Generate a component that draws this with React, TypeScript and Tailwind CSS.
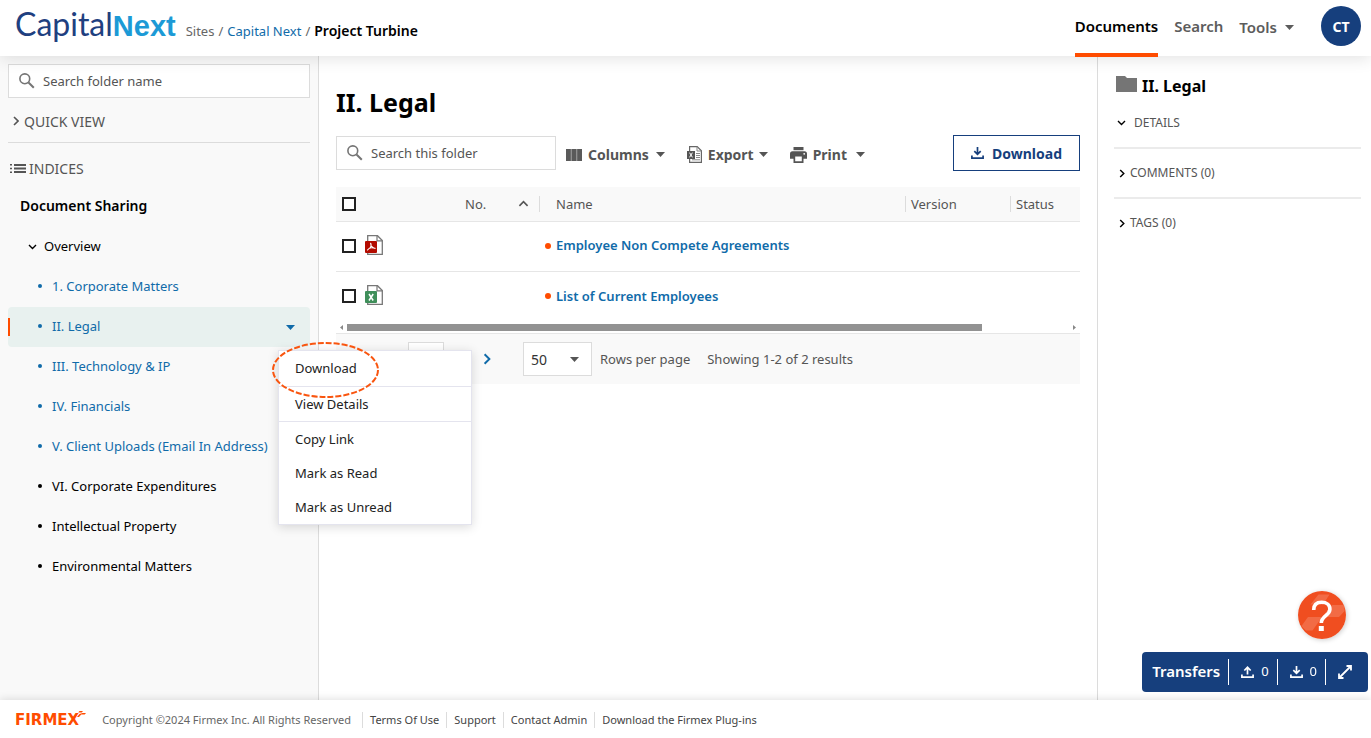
import { ReactNode } from 'react'

const treeItems = [
  { label: '1. Corporate Matters', linked: true },
  { label: 'II. Legal', linked: true, selected: true },
  { label: 'III. Technology & IP', linked: true },
  { label: 'IV. Financials', linked: true },
  { label: 'V. Client Uploads (Email In Address)', linked: true },
  { label: 'VI. Corporate Expenditures' },
  { label: 'Intellectual Property' },
  { label: 'Environmental Matters' },
]

const documents = [
  { name: 'Employee Non Compete Agreements', type: 'pdf' },
  { name: 'List of Current Employees', type: 'xls' },
]

const footerLinks = ['Terms Of Use', 'Support', 'Contact Admin', 'Download the Firmex Plug-ins']

function Caret({ className = '' }: { className?: string }) {
  return (
    <svg className={`h-[5px] w-[9px] shrink-0 ${className}`} viewBox="0 0 9 5" fill="currentColor">
      <path d="M0 0h9L4.5 5z" />
    </svg>
  )
}

function Chevron({ className = '' }: { className?: string }) {
  return (
    <svg className={`shrink-0 ${className}`} viewBox="0 0 6 10" fill="none" stroke="currentColor" strokeWidth="1.6">
      <path d="M1 1l4 4-4 4" />
    </svg>
  )
}

function ChevronDown({ className = 'h-[6px] w-[9px]' }: { className?: string }) {
  return (
    <svg className={`shrink-0 ${className}`} viewBox="0 0 9 6" fill="none" stroke="currentColor" strokeWidth="1.4">
      <path d="M1 1l3.5 3.5L8 1" />
    </svg>
  )
}

function SearchBox({ label, className }: { label: string; className: string }) {
  return (
    <label className={`flex h-[34px] items-center border border-[#dcdcdc] bg-white pl-[10px] ${className}`}>
      <svg className="h-4 w-4 shrink-0 text-[#757575]" viewBox="0 0 16 16" fill="none" stroke="currentColor">
        <circle cx="5.8" cy="5.8" r="4.9" strokeWidth="1.6" />
        <path d="M9.5 9.5l5.3 5.3" strokeWidth="2" />
      </svg>
      <input
        type="text"
        aria-label={label}
        placeholder={label}
        className="ml-2 h-full w-full min-w-0 bg-transparent text-[13px] outline-none placeholder:text-[#555]"
      />
    </label>
  )
}

function FileIcon({ type }: { type: string }) {
  return (
    <svg className="h-5 w-[18px]" viewBox="0 0 18 20">
      <path d="M2.7.7h9.8l4.8 4.8v13.8H2.7z" fill="#fff" stroke="#777" strokeWidth="1.3" />
      <path d="M12 .7v5.2h5.3" fill="none" stroke="#777" strokeWidth="1.2" />
      <rect y="6" width="12" height="12" rx="1" fill={type === 'pdf' ? '#b30b00' : '#3f8f5a'} />
      {type === 'pdf' ? (
        <path
          d="M5.700 8.200c.7 1.800.2 4-.9 5M5.600 8.300c.2 2.700 1.800 4.600 4.500 5.200M2.500 15c1-1.700 4.200-2.700 7.600-1.700"
          fill="none"
          stroke="#fff"
          strokeWidth="1.1"
          strokeLinecap="round"
        />
      ) : (
        <path d="M4 9l4.200 6.500M8.200 9L4 15.500" stroke="#fff" strokeWidth="1.5" />
      )}
    </svg>
  )
}

function TransferIcon({ up = false }: { up?: boolean }) {
  return (
    <svg className="h-3 w-[13px]" viewBox="0 0 13 12" fill="none" stroke="currentColor" strokeWidth="1.7">
      <path d="M.9 8.500v2.600h11.200V8.500" />
      {up ? <path d="M6.500 8.500V1.500M3.300 4.500l3.200-3.200 3.200 3.200" /> : <path d="M6.500 0v7M3.300 4.200l3.200 3.200 3.200-3.200" />}
    </svg>
  )
}

function ColumnsIcon() {
  return (
    <svg className="h-3 w-4" viewBox="0 0 16 12" fill="#5a5a5a">
      <path d="M0 0h16v12H0z" opacity=".45" />
      <path d="M0 0h4.800v12H0zM5.600 0h4.800v12H5.600zM11.200 0H16v12h-4.800z" />
    </svg>
  )
}

function ExportIcon() {
  return (
    <svg className="h-[17px] w-[15px]" viewBox="0 0 15 17">
      <path d="M2.600.6h7.600l4.200 4.200v11.600H2.600z" fill="#fff" stroke="#666" strokeWidth="1.2" />
      <path d="M10 .6v4.400h4.400M9 7.500h4M9 9.500h4M9 11.500h4M5 13.800h8" fill="none" stroke="#888" />
      <rect y="5" width="8" height="8" fill="#555" />
      <path d="M2.600 6.700l2.800 4.600M5.400 6.700l-2.800 4.600" stroke="#fff" strokeWidth="1" />
    </svg>
  )
}

function PrintIcon() {
  return (
    <svg className="h-4 w-[17px]" viewBox="0 0 17 16" fill="currentColor">
      <path d="M3.500 0h10v3.200h-10z" />
      <path fillRule="evenodd" d="M2.500 4.200h12A2.500 2.500 0 0 1 17 6.700v5.100h-3.500V16h-10v-4.200H0V6.700a2.500 2.500 0 0 1 2.500-2.500zM5.200 9.600v4.700h6.600V9.600zM14.200 5.900a.9.900 0 1 0 0 1.800.9.900 0 0 0 0-1.800z" />
    </svg>
  )
}

function ToolButton({ icon, label }: { icon: ReactNode; label: string }) {
  return (
    <button type="button" className="flex items-center gap-1.5 text-[14px] font-bold">
      {icon}
      {label}
    </button>
  )
}

function CheckBox({ label }: { label: string }) {
  return (
    <input
      type="checkbox"
      aria-label={label}
      className="block h-3.5 w-3.5 appearance-none border-2 border-[#222] bg-white checked:bg-[#222]"
    />
  )
}

function Header() {
  return (
    <header className="relative z-20 flex h-14 shrink-0 items-center bg-white pr-[10px] pl-[15px] shadow-[0_2px_16px_rgba(0,0,0,0.12)]">
      <a href="#" className="mb-1.5 font-[Lato,sans-serif] text-[32px] leading-10 text-[#1f4080]">
        Capital<b className="font-['Liberation_Sans',sans-serif] text-[29px] font-bold text-[#1c9ad6]">Next</b>
      </a>
      <nav className="mt-1.5 ml-[10px] flex items-baseline gap-1 text-[13px] text-[#666]" aria-label="Breadcrumb">
        <a href="#">Sites</a>
        <span>/</span>
        <a href="#" className="text-[#106ba9]">Capital Next</a>
        <span>/</span>
        <span className="text-[14px] font-semibold text-black">Project Turbine</span>
      </nav>
      <nav className="ml-auto flex h-full gap-4 text-[15px] font-semibold text-[#5c5c5c]">
        <a href="#" className="-mb-px flex items-center border-b-4 border-[#ff4c00] text-black">Documents</a>
        <a href="#" className="flex items-center pb-[3px]">Search</a>
        <button type="button" className="flex items-center gap-2 pb-[2px] font-semibold">
          Tools <Caret />
        </button>
      </nav>
      <button type="button" className="mb-1 ml-[27px] h-10 w-10 rounded-full bg-[#163f7d] text-[14px] font-bold text-white">
        CT
      </button>
    </header>
  )
}

function ContextMenu() {
  return (
    <div className="absolute top-[43px] left-[270px] z-30 w-[194px] border border-[#e4e4ee] bg-white text-[13px] text-[#222] shadow-[0_2px_10px_rgba(0,0,0,0.15)]">
      <button type="button" className="block h-9 w-full border-b border-[#e4e4ee] px-4 pt-px text-left">Download</button>
      <button type="button" className="block h-[35px] w-full border-b border-[#e4e4ee] px-4 pt-px text-left">View Details</button>
      <button type="button" className="block h-[34px] w-full px-4 pt-px text-left">Copy Link</button>
      <button type="button" className="block h-[34px] w-full px-4 pt-px text-left">Mark as Read</button>
      <button type="button" className="block h-[34px] w-full px-4 pt-px text-left">Mark as Unread</button>
      <svg className="pointer-events-none absolute -top-[9px] -left-[7px] h-[56px] w-[107px]" viewBox="0 0 107 56">
        <ellipse cx="53.500" cy="28" rx="52.500" ry="27" fill="none" stroke="#f9550f" strokeWidth="2" strokeDasharray="6 2" />
      </svg>
    </div>
  )
}

function Sidebar() {
  return (
    <aside className="w-[319px] shrink-0 border-r border-[#dcdcdc] bg-[#f9f9f9] px-2 pt-2">
      <SearchBox label="Search folder name" className="w-full" />
      <button type="button" className="mt-[11px] flex h-6 items-center gap-[5px] pl-[5px] text-[14px] text-[#555]">
        <Chevron className="h-[10px] w-[6px]" />
        QUICK VIEW
      </button>
      <div className="mt-[9px] flex h-[45px] items-center gap-[3px] border-t border-[#dcdcdc] pt-1.5 pl-[2px] text-[14px] text-[#555]">
        <svg className="h-[9px] w-4" viewBox="0 0 16 9" fill="currentColor">
          <path d="M0 0h2v1.500H0zM0 3.700h2v1.500H0zM0 7.400h2v1.500H0zM4 0h12v2H4zM4 3.500h12v2H4zM4 7h12v2H4z" />
        </svg>
        INDICES
      </div>
      <div className="flex h-10 items-center pb-[3px] pl-3 text-[14px] font-semibold text-black">Document Sharing</div>
      <button type="button" className="flex h-10 items-center gap-[7px] pl-5 text-[13px] text-black">
        <ChevronDown />
        Overview
      </button>
      <ul className="text-[13px]">
        {treeItems.map(item => (
          <li
            key={item.label}
            className={`relative flex h-10 items-center rounded pl-[30px] ${item.selected ? 'bg-[#e8f1ef]' : ''} ${item.linked ? 'text-[#106ba9]' : 'text-black'}`}
          >
            {item.selected && <span className="absolute left-0 h-[18px] w-[2px] bg-[#ff4c00]" />}
            <span className="mb-[2px] h-1 w-1 rounded-full bg-current" />
            <a href="#" className="ml-[10px] whitespace-nowrap">{item.label}</a>
            {item.selected && (
              <>
                <button type="button" aria-label="Folder actions" className="mr-[15px] ml-auto">
                  <Caret />
                </button>
                <ContextMenu />
              </>
            )}
          </li>
        ))}
      </ul>
    </aside>
  )
}

function DocumentTable() {
  return (
    <table className="mt-4 w-full table-fixed border-collapse text-left text-[13px]">
      <colgroup>
        <col className="w-[29px]" />
        <col className="w-[100px]" />
        <col className="w-[75px]" />
        <col />
        <col className="w-[105px]" />
        <col className="w-[70px]" />
      </colgroup>
      <thead>
        <tr className="h-[34px] border-b border-[#e6e6e6] bg-[#f9f9f9] leading-4 text-[#555]">
          <th className="pl-[6px]"><CheckBox label="Select all" /></th>
          <th />
          <th className="font-normal">
            <div className="flex h-4 items-center justify-between border-r border-[#dcdcdc] pr-[10px]">
              No.
              <ChevronDown className="h-[7px] w-[11px] rotate-180" />
            </div>
          </th>
          <th className="font-normal">
            <div className="h-4 pl-4">Name</div>
          </th>
          <th className="font-normal">
            <div className="h-4 border-l border-[#dcdcdc] pl-[5px]">Version</div>
          </th>
          <th className="font-normal">
            <div className="h-4 border-l border-[#dcdcdc] pl-[5px]">Status</div>
          </th>
        </tr>
      </thead>
      <tbody>
        {documents.map(doc => (
          <tr key={doc.name} className="h-[50px] border-b border-[#e6e6e6] last:border-b-0">
            <td className="pl-[6px]"><CheckBox label={`Select ${doc.name}`} /></td>
            <td className="pb-[2px]"><FileIcon type={doc.type} /></td>
            <td />
            <td className="pl-[5px]">
              <div className="flex items-center gap-[5px] font-semibold whitespace-nowrap text-[#106ba9]">
                <span className="h-1.5 w-1.5 rounded-full bg-[#ff4c00]" />
                <a href="#">{doc.name}</a>
              </div>
            </td>
            <td />
            <td />
          </tr>
        ))}
      </tbody>
    </table>
  )
}

function Scrollbar() {
  return (
    <div className="flex h-[13px] items-center border-b border-[#e6e6e6] px-1 text-[#888]">
      <svg className="h-[5px] w-[3px]" viewBox="0 0 3 5" fill="currentColor"><path d="M3 0v5L0 2.500z" /></svg>
      <div className="mx-1 flex-1">
        <div className="h-[7px] w-[88%] bg-[#929292]" />
      </div>
      <svg className="h-[5px] w-[3px]" viewBox="0 0 3 5" fill="currentColor"><path d="M0 0v5l3-2.500z" /></svg>
    </div>
  )
}

function Pager() {
  return (
    <div className="flex h-[50px] items-center bg-[#f9f9f9] text-[13px] text-[#555]">
      <input
        type="text"
        aria-label="Page"
        defaultValue="1"
        className="ml-[72px] h-[34px] w-9 border border-[#dcdcdc] bg-white text-center"
      />
      <button type="button" aria-label="Next page" className="ml-[39px] text-[#106ba9]">
        <Chevron className="h-3 w-2" />
      </button>
      <div className="relative ml-8">
        <select
          aria-label="Rows per page"
          className="block h-[34px] w-[69px] appearance-none border border-[#dcdcdc] bg-white pl-[7px] text-[14px] text-[#333]"
        >
          <option>50</option>
          <option>100</option>
        </select>
        <Caret className="pointer-events-none absolute top-[15px] right-[13px]" />
      </div>
      <span className="mt-px ml-2">Rows per page</span>
      <span className="mt-px ml-[17px]">Showing 1-2 of 2 results</span>
    </div>
  )
}

function Documents() {
  return (
    <main className="min-w-0 flex-1 px-[17px] pt-[30px]">
      <h1 className="text-[25px] leading-8 font-bold text-black">II. Legal</h1>
      <div className="mt-[17px] flex h-9 items-center">
        <SearchBox label="Search this folder" className="w-[220px]" />
        <div className="mt-[3px] ml-[10px] flex items-center text-[#555]">
          <ToolButton icon={<ColumnsIcon />} label="Columns" />
          <Caret className="mr-[22px] ml-[7px]" />
          <ToolButton icon={<ExportIcon />} label="Export" />
          <Caret className="mr-[22px] ml-[5px]" />
          <ToolButton icon={<PrintIcon />} label="Print" />
          <Caret className="ml-[9px]" />
        </div>
        <button
          type="button"
          className="ml-auto flex h-9 w-[127px] items-center justify-center gap-2 border border-[#163f7d] text-[14px] font-bold text-[#163f7d]"
        >
          <TransferIcon />
          Download
        </button>
      </div>
      <DocumentTable />
      <Scrollbar />
      <Pager />
    </main>
  )
}

function DetailsPanel() {
  return (
    <aside className="w-[274px] shrink-0 border-l border-[#dcdcdc] bg-white pt-4 pr-[10px] pl-4">
      <div className="flex h-7 items-center gap-[5px] pl-[2px] text-[16px] font-bold text-black">
        <svg className="mb-1 h-4 w-[21px]" viewBox="0 0 21 16" fill="#757575">
          <path d="M0 0h9l2 2h10v14H0z" />
        </svg>
        II. Legal
      </div>
      <div className="text-[12px] text-[#555]">
        <button type="button" className="mt-[10px] flex h-[25px] items-center gap-2 pl-[3px]">
          <ChevronDown className="h-[6px] w-[9px] text-black" />
          DETAILS
        </button>
        <div className="mt-3 h-[52px] border-y-2 border-[#ebebeb]">
          <button type="button" className="flex h-12 items-center gap-[5px] pl-[5px]">
            <Chevron className="h-[9px] w-[6px] text-black" />
            COMMENTS (0)
          </button>
        </div>
        <button type="button" className="flex h-12 items-center gap-[5px] pl-[5px]">
          <Chevron className="h-[9px] w-[6px] text-black" />
          TAGS (0)
        </button>
      </div>
    </aside>
  )
}

function Transfers() {
  return (
    <div className="fixed right-[3px] bottom-[46px] z-20 flex h-10 items-center rounded bg-[#163f7d] pl-[10px] text-[13px] text-white">
      <span className="pb-[2px] text-[15px] font-semibold">Transfers</span>
      <div className="ml-2 flex h-[26px] items-center gap-[7px] border-l border-white pl-3">
        <TransferIcon up />0
      </div>
      <div className="ml-2 flex h-[26px] items-center gap-[7px] border-l border-white pl-3">
        <TransferIcon />0
      </div>
      <button type="button" aria-label="Expand transfers" className="ml-2 flex h-[26px] items-center border-l border-white pr-4 pl-3">
        <svg className="h-[14px] w-[14px]" viewBox="0 0 14 14" fill="none" stroke="currentColor" strokeWidth="1.8">
          <path d="M1.500 12.500l11-11M8.500 1h4.500v4.500M1 8.500V13h4.500" />
        </svg>
      </button>
    </div>
  )
}

function HelpButton() {
  return (
    <button type="button" aria-label="Help" className="fixed right-[25px] bottom-[99px] z-20 rounded-full shadow-[1px_1px_5px_rgba(0,0,0,0.2)]">
      <svg className="block h-12 w-12" viewBox="0 0 48 48">
        <circle cx="24" cy="24" r="24" fill="#f04e20" />
        <path d="M20.500 3.500h11L25 13.500H12.500zM34 14h11.800a24 24 0 0 1 .8 6L41 26H24zM10 26h14l-9.500 13.500H8A24 24 0 0 1 3.500 35z" fill="#fff" opacity=".17" />
        <path d="M15.700 19c0-5.600 3.500-7.700 8-7.700 4.700 0 8.200 2.500 8.200 7 0 6.300-8.600 6.500-8.600 13.700" fill="none" stroke="#fff" strokeWidth="3.6" />
        <path d="M20.800 35h5v5h-5z" fill="#fff" />
      </svg>
    </button>
  )
}

function Footer() {
  return (
    <footer className="relative z-10 flex h-[38px] shrink-0 items-center bg-white pt-[2px] pl-[15px] text-[11px] text-[#666] shadow-[0_-1px_8px_rgba(0,0,0,0.12)]">
      <a href="#" className="flex items-center font-['DejaVu_Sans',sans-serif] text-[15px] leading-4 font-bold text-[#ff4c00]">
        FIRMEX
        <svg className="mb-3 -ml-[2px] h-[7px] w-[9px]" viewBox="0 0 9 7" fill="currentColor">
          <path d="M2.500 0H6L4.700 1.500H1.200zM5.500 2H9L7.700 3.500H4.200L2 6H0l2.500-3z" />
        </svg>
      </a>
      <span className="mr-1 ml-4">Copyright ©2024 Firmex Inc. All Rights Reserved</span>
      {footerLinks.map(link => (
        <a key={link} href="#" className="ml-[7px] border-l border-[#dcdcdc] pl-[7px] leading-4 text-[#444]">{link}</a>
      ))}
    </footer>
  )
}

export default function App() {
  return (
    <div className="flex min-h-screen flex-col bg-white font-['Noto_Sans','Open_Sans',sans-serif]">
      <Header />
      <div className="flex flex-1">
        <Sidebar />
        <Documents />
        <DetailsPanel />
      </div>
      <Footer />
      <HelpButton />
      <Transfers />
    </div>
  )
}
